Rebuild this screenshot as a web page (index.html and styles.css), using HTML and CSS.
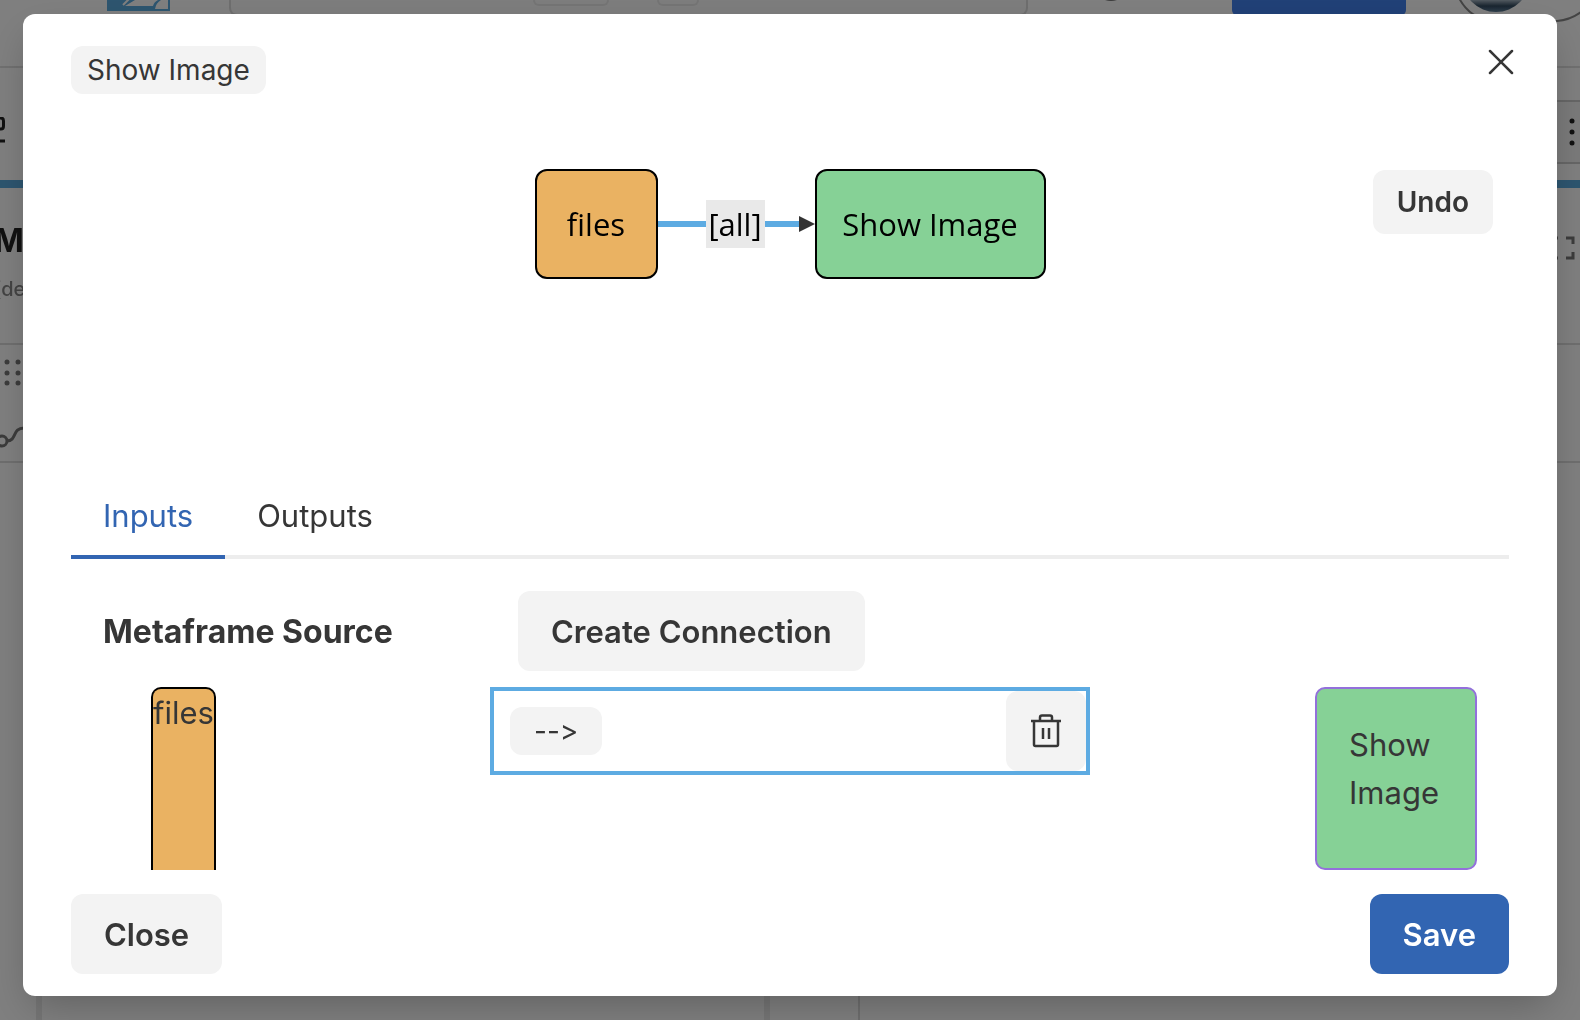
FILE: index.html
```html
<!DOCTYPE html>
<html lang="en">
<head>
<meta charset="utf-8">
<meta name="viewport" content="width=device-width, initial-scale=1">
<title>Show Image</title>
<link rel="stylesheet" href="styles.css">
</head>
<body>
<div class="app" aria-hidden="true" inert>
  <header class="app-header">
    <svg class="logo" width="64" height="12" viewBox="0 0 64 12"><rect width="63" height="11" fill="#5babdf"/><path d="M23-2 16 5" fill="none" stroke="#fff" stroke-width="2"/><path d="M28 0h23q-4 2-5 6H18zM61 0v9H48q1-6 6-9z" fill="#fff"/></svg>
    <div class="search"><span class="key key-wide"></span><span class="key"></span></div>
    <svg class="dot" width="12" height="2" viewBox="0 0 12 2"><path d="M0 0h12q-6 2-12 0" fill="#777"/></svg>
    <span class="app-primary"></span>
    <svg class="account" width="124" height="24" viewBox="0 0 124 24"><defs><linearGradient id="photo" x1="0" y1="0" x2="0" y2="12" gradientUnits="userSpaceOnUse"><stop stop-color="#a4b4c0"/><stop offset=".5" stop-color="#334a60"/><stop offset="1" stop-color="#5e7e98"/></linearGradient></defs><circle cx="40" cy="-22" r="34" fill="url(#photo)"/><path d="M2-4Q12 17 34 21H101Q114 20 125 12" fill="none" stroke="#888" stroke-width="2"/></svg>
  </header>
  <div class="app-toolbar">
    <svg width="6" height="30" viewBox="0 0 6 30"><path d="M0 1h1q2.500 0 2.500 3v5q0 3-2.500 3H0M0 24h5" fill="none" stroke="#222" stroke-width="3"/></svg>
    <div class="more"><svg width="6" height="28" viewBox="0 0 6 28" fill="#222"><circle cx="3" cy="3" r="2.500"/><circle cx="3" cy="14" r="2.500"/><circle cx="3" cy="25" r="2.500"/></svg></div>
  </div>
  <div class="app-title">
    <div class="app-name"><b>M</b><span>(de</span></div>
    <svg width="26" height="24" viewBox="0 0 26 24" fill="none" stroke="#777" stroke-width="3"><path d="M0 2h9M0 22h9M17 2h7v6M24 16v6h-7"/></svg>
  </div>
  <div class="app-list">
    <svg width="24" height="116" viewBox="0 0 24 116"><g fill="#777"><circle cx="7" cy="17" r="2.500"/><circle cx="18" cy="17" r="2.500"/><circle cx="7" cy="28" r="2.500"/><circle cx="18" cy="28" r="2.500"/><circle cx="7" cy="38" r="2.500"/><circle cx="18" cy="38" r="2.500"/></g><g fill="none" stroke="#777" stroke-width="3"><circle cx="2" cy="96" r="5"/><path d="M7 96c10 0 5-13 17-13"/></g></svg>
  </div>
  <div class="app-panes"><span></span><span></span><span></span><span></span></div>
</div>

<div class="overlay">
  <main class="modal" role="dialog" aria-modal="true" aria-labelledby="modal-title">
    <header class="modal-header">
      <h1 class="chip" id="modal-title">Show Image</h1>
      <button class="close-icon" type="button" aria-label="Close dialog">
        <svg width="26" height="26" viewBox="0 0 26 26" fill="none" stroke="#363636" stroke-width="2.500" stroke-linecap="round"><path d="M2 2l22 22M24 2L2 24"/></svg>
      </button>
    </header>

    <section class="preview">
      <div class="graph">
        <div class="graph-node source">files</div>
        <div class="edge">
          <span class="edge-label">[all]</span>
          <svg class="arrow" width="16" height="16" viewBox="0 0 16 16"><path d="M0 0h4v16H0z" fill="#333"/><path d="M0 0h16v16H0z" fill="#fff"/><path d="M0 0l16 8-16 8z" fill="#333"/></svg>
        </div>
        <div class="graph-node target">Show Image</div>
      </div>
      <button class="btn btn-small" type="button">Undo</button>
    </section>

    <div class="tabs" role="tablist">
      <button class="tab active" type="button" role="tab" aria-selected="true">Inputs</button>
      <button class="tab" type="button" role="tab" aria-selected="false">Outputs</button>
    </div>

    <section class="panel" role="tabpanel">
      <h2 class="panel-title">Metaframe Source</h2>
      <div class="create"><button class="btn" type="button">Create Connection</button></div>
      <div class="source-box">files</div>
      <div class="connection">
        <span class="chip arrow-chip">--&gt;</span>
        <button class="delete" type="button" aria-label="Delete connection">
          <svg width="32" height="34" viewBox="0 0 32 34" fill="none" stroke="#363636" stroke-width="2.500"><path d="M1 7h30M4 7v23.500q0 1.500 1.500 1.500h21q1.500 0 1.500-1.500V7M10 7V3.500q0-2 2-2h8q2 0 2 2V7M13 14v11M19 14v11"/></svg>
        </button>
      </div>
      <div class="target-box">Show Image</div>
    </section>

    <footer class="modal-footer">
      <button class="btn" type="button">Close</button>
      <button class="btn btn-primary" type="button">Save</button>
    </footer>
  </main>
</div>
</body>
</html>
```
FILE: styles.css
```css
* { box-sizing: border-box; }

body {
  margin: 0;
  height: 100vh;
  overflow: hidden;
  color: #363636;
  background: #fff;
  font: 400 31px/48px Inter, "Liberation Sans", sans-serif;
}

button { font: inherit; color: inherit; border: 0; cursor: pointer; }
h1, h2 { margin: 0; }
svg { display: block; flex: none; }

/* Page behind the dialog */
.app {
  position: fixed;
  inset: 0;
  display: flex;
  flex-direction: column;
  overflow: hidden;
}
.app-header {
  display: flex;
  align-items: flex-start;
  flex: none;
  height: 68px;
  padding-left: 107px;
  border-bottom: 2px solid #e0e0e0;
}
.app-header > * { flex: none; }
.search {
  display: flex;
  justify-content: center;
  gap: 48px;
  width: 799px;
  height: 16px;
  margin-left: 58px;
  padding-right: 26px;
  background: #fafafa;
  border: 2px solid #ddd;
  border-top: 0;
  border-radius: 0 0 8px 8px;
}
.key {
  width: 42px;
  height: 6px;
  border: 2px solid #e8e8e8;
  border-top: 0;
  border-radius: 0 0 10px 10px;
}
.key-wide { width: 76px; }
.dot { margin-left: 77px; }
.app-primary {
  width: 174px;
  height: 16px;
  margin-left: 115px;
  background: #4282ee;
  border-radius: 0 0 6px 6px;
}
.account { margin-left: 50px; }
.app-toolbar {
  display: flex;
  justify-content: space-between;
  align-items: center;
  flex: none;
  height: 112px;
  padding-top: 16px;
}
.more {
  display: flex;
  align-items: center;
  justify-content: flex-end;
  width: 100px;
  height: 64px;
  padding-right: 5px;
  background: #f4f4f4;
  border: 2px solid #ccc;
  border-right: 0;
}
.app-title {
  display: flex;
  justify-content: space-between;
  flex: none;
  height: 163px;
  padding: 44px 5px 0 0;
  border-top: 8px solid #5babdf;
}
.app-title > svg { margin-top: 4px; }
.app-name {
  display: flex;
  flex-direction: column;
  margin: -15px 0 0 -6px;
  color: #222;
  font-size: 32px;
}
.app-name span { color: #888; font-size: 20px; font-weight: 500; }
.app-list {
  flex: none;
  height: 120px;
  border: solid #ddd;
  border-width: 2px 0;
}
.app-panes {
  display: grid;
  grid-template-columns: 42px 728px 90px 1fr;
  flex: 1;
}
.app-panes span { border-right: 2px solid #ddd; }
.app-panes span:nth-child(-n+2) { border-right: 6px solid #ebebeb; }
.app-panes span:last-child { border: 0; }

/* Dialog */
.overlay {
  position: fixed;
  inset: 0;
  padding: 14px 23px 24px;
  background: rgba(0, 0, 0, .5);
}
.modal {
  display: flex;
  flex-direction: column;
  height: 100%;
  padding: 32px 48px 22px;
  background: #fff;
  border-radius: 12px;
  box-shadow: 0 16px 40px -8px rgba(0, 0, 0, .25);
}
.modal-header {
  display: flex;
  justify-content: space-between;
  align-items: flex-start;
}
.chip {
  padding: 0 16px;
  background: #f3f3f3;
  border-radius: 12px;
  font-size: 28px;
  font-weight: 400;
}
.close-icon {
  display: grid;
  place-items: center;
  width: 48px;
  height: 48px;
  margin: -8px -16px 0 0;
  padding: 0;
  background: none;
}
.btn {
  height: 80px;
  padding: 2px 33px 0;
  background: #f3f3f3;
  border-radius: 12px;
  font-weight: 600;
}
.btn-small { height: 64px; padding: 0 24px; font-size: 28px; }
.btn-primary { color: #fff; background: #3265b2; }

.preview {
  display: grid;
  grid-template-columns: 1fr auto 1fr;
  align-items: start;
  flex: none;
  height: 306px;
  margin-top: 75px;
  padding-right: 16px;
}
.graph {
  display: flex;
  align-items: center;
  grid-column: 2;
  margin-left: 16px;
}
.preview .btn { justify-self: end; margin-top: 1px; }
.graph-node {
  display: grid;
  place-items: center;
  height: 110px;
  border: 2px solid #000;
  border-radius: 12px;
  color: #000;
  font-family: "Trebuchet MS", "Open Sans", sans-serif;
}
.graph-node.source { width: 123px; background: #eab262; }
.graph-node.target { width: 231px; background: #86d196; }
.edge {
  display: flex;
  align-items: center;
  justify-content: flex-end;
  gap: 34px;
  width: 157px;
  background: linear-gradient(#5dabe2, #5dabe2) center / 100% 6px no-repeat;
}
.edge-label {
  width: 59px;
  height: 48px;
  background: #e9e9e9;
  color: #000;
  font-family: "Trebuchet MS", "Open Sans", sans-serif;
  text-align: center;
}

.tabs {
  display: flex;
  flex: none;
  border-bottom: 4px solid #ededed;
}
.tab {
  height: 84px;
  margin-bottom: -4px;
  padding: 2px 32px 0;
  background: none;
  border-bottom: 4px solid transparent;
}
.tab.active { color: #3265b2; border-color: #3265b2; }

.panel {
  display: grid;
  grid-template-columns: 1fr 600px 1fr;
  grid-template-rows: 80px 1fr;
  row-gap: 16px;
  flex: 1;
  min-height: 0;
  padding: 32px 32px 0;
  overflow: hidden;
}
.panel-title {
  align-self: center;
  padding-top: 2px;
  font-size: 32px;
  font-weight: 700;
}
.create { grid-column: 2 / 4; padding-left: 28px; }
.source-box {
  justify-self: start;
  margin-left: 48px;
  background: #eab262;
  border: 2px solid #000;
  border-bottom: 0;
  border-radius: 10px 10px 0 0;
}
.connection {
  display: flex;
  align-items: center;
  justify-content: space-between;
  align-self: start;
  height: 88px;
  padding-left: 16px;
  border: 4px solid #5dabe2;
}
.arrow-chip {
  padding: 0 24px;
  font-variant-ligatures: none;
  font-feature-settings: "calt" 0;
}
.delete {
  display: grid;
  place-items: center;
  width: 80px;
  height: 80px;
  padding: 0;
  background: #f3f3f3;
  border-radius: 12px;
}
.target-box {
  justify-self: end;
  width: 162px;
  padding: 32px;
  background: #86d196;
  border: 2px solid #9370db;
  border-radius: 10px;
}

.modal-footer {
  display: flex;
  justify-content: space-between;
  flex: none;
  margin-top: 24px;
}
```
